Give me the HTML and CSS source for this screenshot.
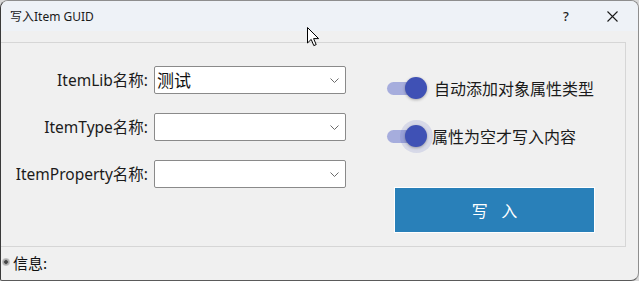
FILE: index.html
```html
<!DOCTYPE html>
<html lang="zh">
<head>
<meta charset="utf-8">
<title>写入Item GUID</title>
<link rel="stylesheet" href="styles.css">
</head>
<body>
<div class="window">
  <div class="titlebar">
    <span class="title">写入Item GUID</span>
    <span class="tb-btn help">?</span>
    <span class="tb-btn close">
      <svg width="11" height="11" viewBox="0 0 11 11"><path d="M0.5 0.5 L10.5 10.5 M10.5 0.5 L0.5 10.5" stroke="#1a1a1a" stroke-width="1.1" fill="none"/></svg>
    </span>
  </div>
  <div class="content">
    <div class="panel">
      <div class="form">
        <label class="lbl">ItemLib名称:</label>
        <div class="combo"><span class="combo-text">测试</span><svg class="chev" width="9" height="5" viewBox="0 0 9 5"><path d="M0.5 0.5 L4.5 4.5 L8.5 0.5" stroke="#6a6a6a" stroke-width="1" fill="none"/></svg></div>
        <label class="lbl">ItemType名称:</label>
        <div class="combo"><span class="combo-text"></span><svg class="chev" width="9" height="5" viewBox="0 0 9 5"><path d="M0.5 0.5 L4.5 4.5 L8.5 0.5" stroke="#6a6a6a" stroke-width="1" fill="none"/></svg></div>
        <label class="lbl">ItemProperty名称:</label>
        <div class="combo"><span class="combo-text"></span><svg class="chev" width="9" height="5" viewBox="0 0 9 5"><path d="M0.5 0.5 L4.5 4.5 L8.5 0.5" stroke="#6a6a6a" stroke-width="1" fill="none"/></svg></div>
      </div>
      <div class="options">
        <div class="toggle-row">
          <span class="switch"><span class="track"></span><span class="knob"></span></span>
          <span class="toggle-text">自动添加对象属性类型</span>
        </div>
        <div class="toggle-row second">
          <span class="switch focused"><span class="track"></span><span class="halo"></span><span class="knob"></span></span>
          <span class="toggle-text">属性为空才写入内容</span>
        </div>
        <button class="write-btn">写 入</button>
      </div>
    </div>
    <div class="status">
      <span class="status-icon"></span>
      <span class="status-text">信息:</span>
    </div>
  </div>
  <svg class="cursor" width="13" height="20" viewBox="0 0 13 20"><path d="M0.5 0.5 L0.5 16 L4.2 12.4 L6.8 18.6 L9.2 17.6 L6.6 11.6 L11.6 11.6 Z" fill="#fff" stroke="#000" stroke-width="1" stroke-linejoin="round"/></svg>
</div>
</body>
</html>
```

FILE: styles.css
```css
* { box-sizing: border-box; }
html, body {
  margin: 0;
  padding: 0;
  width: 639px;
  height: 281px;
  background: #d9d9d9;
  overflow: hidden;
}
body {
  font-family: "Noto Sans CJK SC", "Noto Sans", sans-serif;
  color: #1b1b1b;
}
.window {
  position: relative;
  width: 639px;
  height: 281px;
  border: 1px solid #8e8e8e;
  border-left-color: #3a3a3a;
  border-bottom-color: #5a5a5a;
  border-radius: 8px 8px 8px 2px;
  overflow: hidden;
  display: flex;
  flex-direction: column;
  background: #f0f0f0;
}
.titlebar {
  height: 30px;
  flex: none;
  background: #eef2f7;
  display: flex;
  align-items: center;
  padding-left: 9px;
  font-size: 12px;
}
.title {
  flex: 1;
  font-family: "Noto Sans", "Noto Sans CJK SC", sans-serif;
  font-size: 12px;
  color: #1a1a1a;
}
.tb-btn {
  display: flex;
  align-items: center;
  justify-content: center;
}
.help {
  width: 46px;
  font-family: "Noto Sans", sans-serif;
  font-size: 13px;
  font-weight: 500;
}
.close {
  width: 46px;
  margin-right: 3px;
}
.content {
  flex: 1;
  display: flex;
  flex-direction: column;
  padding-top: 11px;
}
.panel {
  height: 205px;
  margin-right: 12px;
  border: 1px solid #d6d6d6;
  border-left: none;
  display: flex;
  align-items: flex-start;
}
.form {
  display: grid;
  grid-template-columns: 147px 192px;
  column-gap: 6px;
  row-gap: 19px;
  padding-top: 23px;
  align-items: center;
}
.lbl {
  justify-self: end;
  font-family: "Noto Sans", "Noto Sans CJK SC", sans-serif;
  font-size: 15.5px;
  line-height: 28px;
  white-space: nowrap;
  color: #1b1b1b;
}
.combo {
  height: 28px;
  background: #fff;
  border: 1px solid #8a8a8a;
  border-radius: 2px;
  display: flex;
  align-items: center;
  padding: 0 6px 0 2px;
}
.combo-text {
  flex: 1;
  font-size: 17px;
  line-height: 26px;
  color: #111;
}
.chev { flex: none; }
.options {
  margin-left: 41px;
  padding-top: 33px;
  display: flex;
  flex-direction: column;
}
.toggle-row {
  height: 24px;
  display: flex;
  align-items: center;
}
.toggle-row.second { margin-top: 24px; }
.switch {
  position: relative;
  width: 40px;
  height: 24px;
  flex: none;
  display: flex;
  align-items: center;
}
.track {
  width: 35px;
  height: 13px;
  border-radius: 7px;
  background: #a6addd;
}
.knob {
  position: absolute;
  left: 18px;
  top: 1px;
  width: 22px;
  height: 22px;
  border-radius: 50%;
  background: #3f51b5;
  box-shadow: 0 1px 3px rgba(0,0,0,0.3);
}
.halo {
  position: absolute;
  left: 13px;
  top: -4.5px;
  width: 33px;
  height: 33px;
  border-radius: 50%;
  background: rgba(63, 81, 181, 0.14);
}
.toggle-text {
  margin-left: 7px;
  font-size: 16px;
  color: #1b1b1b;
  white-space: nowrap;
}
.toggle-row.second .toggle-text { margin-left: 5px; }
.write-btn {
  margin-top: 39px;
  margin-left: 7px;
  width: 201px;
  height: 46px;
  background: #2980b9;
  border: 1px solid #fff;
  color: #fff;
  font-family: "Noto Sans CJK SC", sans-serif;
  font-size: 16px;
  letter-spacing: 5px;
  padding: 0 0 0 5px;
  cursor: default;
}
.status {
  flex: 1;
  display: flex;
  align-items: center;
  padding-left: 1px;
  padding-bottom: 3px;
}
.status-icon {
  width: 8px;
  height: 8px;
  border-radius: 50%;
  background: radial-gradient(circle, #444 0 1.5px, #9a9a9a 2px, #cfcfcf 4px);
  margin-right: 3px;
}
.status-text {
  font-size: 15px;
  color: #111;
}
.cursor {
  position: absolute;
  left: 306px;
  top: 26px;
}
```
